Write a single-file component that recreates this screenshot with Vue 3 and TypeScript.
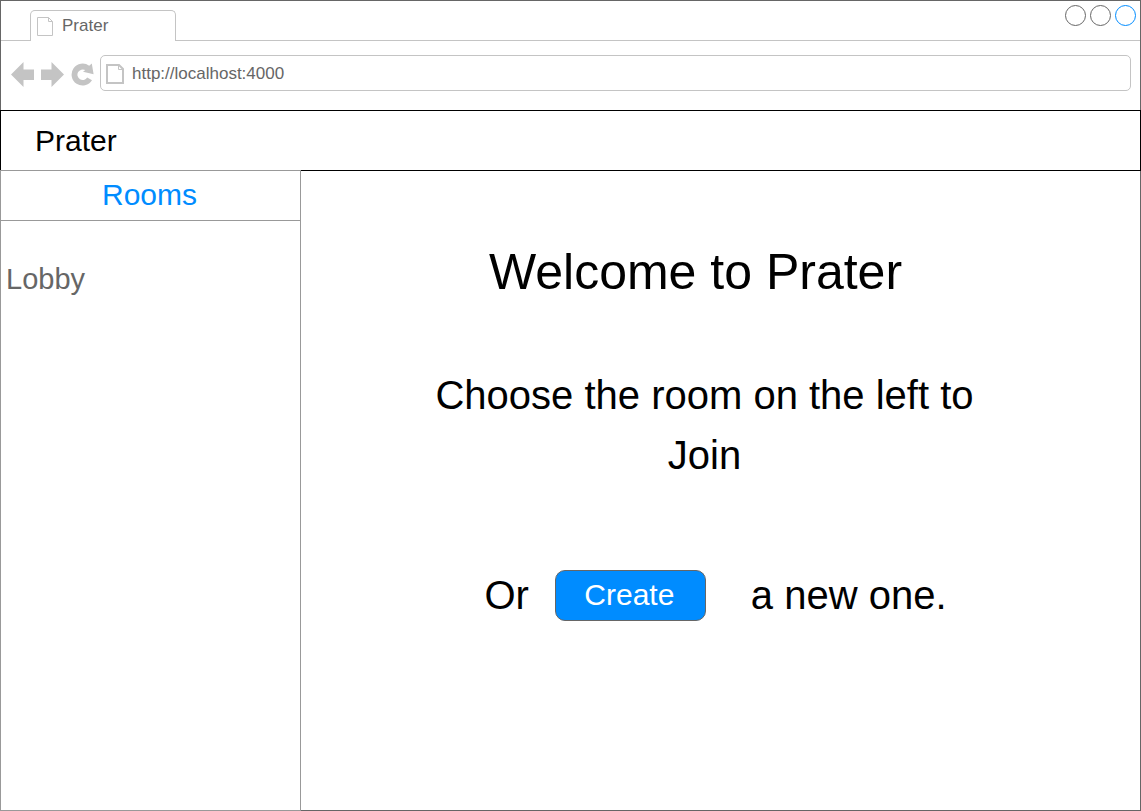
<script setup lang="ts">
import { ref } from 'vue'

const title = 'Prater'
const url = ref('http://localhost:4000')
const rooms: string[] = ['Lobby']
const controls = [
  { label: 'Minimize', accent: false },
  { label: 'Maximize', accent: false },
  { label: 'Close', accent: true },
]
</script>

<template>
  <div class="window">
    <div class="tabs">
      <div class="tab">
        <svg class="tab-icon" width="18" height="20" viewBox="0 0 18 20" aria-hidden="true">
          <path d="M1.5 1.5H12.5L16.5 5.5V19.5H1.5ZM12.5 1.5V5.5H16.5" />
        </svg>
        <span>{{ title }}</span>
      </div>
      <div class="controls">
        <button
          v-for="c in controls"
          :key="c.label"
          type="button"
          class="control"
          :class="{ accent: c.accent }"
          :aria-label="c.label"
        ></button>
      </div>
    </div>

    <div class="toolbar">
      <nav class="nav">
        <button type="button" aria-label="Back">
          <svg width="24" height="26" viewBox="0 0 24 26"><path d="M0 12.5L12.5 0V7.5H23V18H12.5V25Z" /></svg>
        </button>
        <button type="button" aria-label="Forward">
          <svg width="24" height="26" viewBox="0 0 24 26"><path d="M23 12.5L10.5 0V7.5H0V18H10.5V25Z" /></svg>
        </button>
        <button type="button" aria-label="Reload">
          <svg width="25" height="26" viewBox="0 0 25 26">
            <path d="M18.2 3.8L20.8 1.6L22.6 12.3L12 9.8L14.3 8.1A5.3 5.3 0 1 0 16.2 15.6L21 18.3A11 11 0 1 1 18.2 3.8Z" />
          </svg>
        </button>
      </nav>
      <label class="address">
        <svg class="page-icon" width="20" height="22" viewBox="0 0 20 22" aria-hidden="true">
          <path d="M2 2H14L18 6V20H2Z" />
          <path class="fold" d="M13.5 2V6.5H18" />
        </svg>
        <input v-model="url" type="text" aria-label="Address" />
      </label>
    </div>

    <header class="header">{{ title }}</header>

    <div class="body">
      <aside class="sidebar">
        <h2>Rooms</h2>
        <ul>
          <li v-for="room in rooms" :key="room"><a href="#">{{ room }}</a></li>
        </ul>
      </aside>
      <main class="main">
        <h1>Welcome to Prater</h1>
        <p class="hint">Choose the room on the left to Join</p>
        <div class="create">
          <span>Or</span>
          <button type="button">Create</button>
          <span>a new one.</span>
        </div>
      </main>
    </div>
  </div>
</template>

<style>
body {
  margin: 0;
  background: #fff;
}
</style>

<style scoped>
.window {
  box-sizing: border-box;
  min-height: 100vh;
  display: flex;
  flex-direction: column;
  border: 1px solid #666;
  font-family: "Liberation Sans", Arial, sans-serif;
  color: #000;
}
button {
  font: inherit;
  cursor: pointer;
}
.tabs {
  display: flex;
  justify-content: space-between;
  height: 39px;
  padding: 0 4px 0 29px;
  border-bottom: 1px solid #c4c4c4;
}
.tab {
  box-sizing: border-box;
  display: flex;
  align-items: center;
  gap: 8px;
  width: 146px;
  height: 31px;
  margin-top: 9px;
  padding-left: 5px;
  border: 1px solid #c4c4c4;
  border-bottom: 0;
  border-radius: 5px 5px 0 0;
  background: #fff;
  color: #666;
  font-size: 17px;
}
.tab-icon {
  fill: none;
  stroke: #c4c4c4;
}
.controls {
  display: flex;
  gap: 4px;
  padding-top: 4px;
}
.control {
  box-sizing: border-box;
  width: 21px;
  height: 21px;
  padding: 0;
  border: 1px solid #666;
  border-radius: 50%;
  background: #fff;
}
.control.accent {
  border-color: #008cff;
}
.toolbar {
  display: flex;
  align-items: center;
  gap: 4px;
  padding: 14px 9px 19px 10px;
}
.nav {
  display: flex;
  gap: 6px;
  padding-top: 3px;
}
.nav button {
  display: flex;
  padding: 0;
  border: 0;
  background: none;
}
.nav svg {
  fill: #c4c4c4;
}
.address {
  box-sizing: border-box;
  flex: 1;
  display: flex;
  align-items: center;
  gap: 7px;
  height: 36px;
  padding: 1px 4px 0;
  border: 1px solid #c4c4c4;
  border-radius: 5px;
}
.page-icon {
  fill: none;
  stroke: #c4c4c4;
  stroke-width: 2;
}
.fold {
  stroke-width: 1;
}
.address input {
  flex: 1;
  min-width: 0;
  padding: 0;
  border: 0;
  outline: 0;
  background: none;
  color: #666;
  font: inherit;
  font-size: 17px;
}
.header {
  margin: 0 -1px;
  padding: 0 34px;
  border: 1px solid #000;
  font-size: 30px;
  line-height: 59px;
}
.body {
  flex: 1;
  display: flex;
}
.sidebar {
  box-sizing: border-box;
  width: 301px;
  margin: -1px 0 -1px -1px;
  border: 1px solid #999;
}
.sidebar h2 {
  margin: 0;
  padding: 0 2px 2px 0;
  border-bottom: 1px solid #999;
  color: #008cff;
  font-size: 30px;
  font-weight: 400;
  line-height: 47px;
  text-align: center;
}
.sidebar ul {
  margin: 0;
  padding: 38px 5px;
  list-style: none;
}
.sidebar a {
  color: #666;
  font-size: 29px;
  line-height: 40px;
  text-decoration: none;
}
.main {
  flex: 1;
  display: flex;
  flex-direction: column;
  align-items: center;
  padding-top: 71px;
}
h1 {
  margin: 0;
  padding-right: 50px;
  font-size: 50px;
  font-weight: 400;
  line-height: 60px;
}
.hint {
  max-width: 600px;
  margin: 63px 0 85px;
  padding-right: 32px;
  font-size: 40px;
  line-height: 60px;
  text-align: center;
}
.create {
  display: flex;
  align-items: center;
  padding-right: 10px;
  font-size: 40px;
}
.create button {
  box-sizing: border-box;
  width: 151px;
  height: 51px;
  margin: 0 45px 0 26px;
  padding: 0 2px 2px 0;
  border: 1px solid #666;
  border-radius: 10px;
  background: #008cff;
  color: #fff;
  font-size: 30px;
}
</style>
